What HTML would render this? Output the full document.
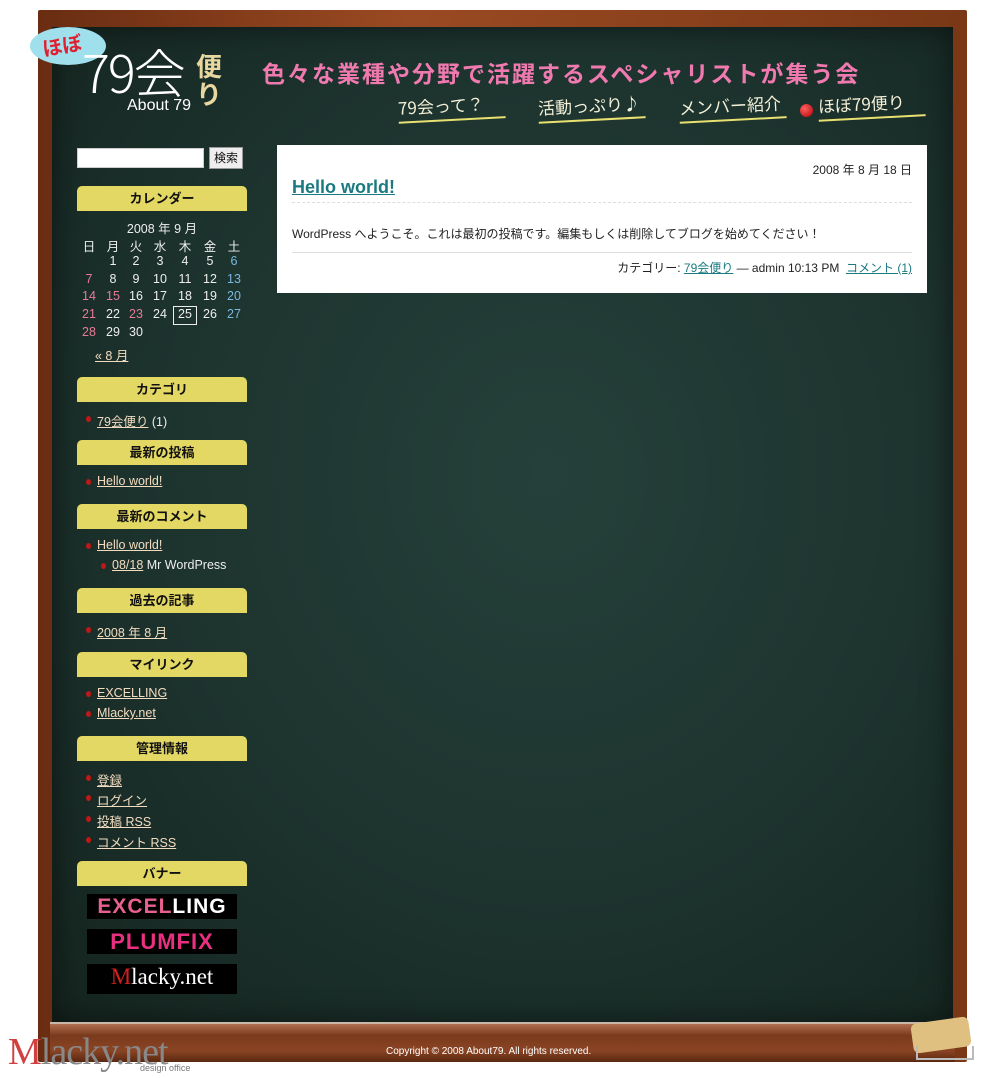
<!DOCTYPE html>
<html><head><meta charset="utf-8"><style>
*{margin:0;padding:0;box-sizing:border-box}
body{width:1000px;height:1078px;background:#fff;position:relative;overflow:hidden;font-family:"Liberation Sans","Noto Sans CJK JP",sans-serif;font-size:12px;color:#eee}
.a{position:absolute}
#frame{left:38px;top:10px;width:929px;height:1052px;background:linear-gradient(90deg,#6a2d12,#9a4a22 40%,#7a3816);border-radius:2px}
#board{left:52px;top:27px;width:901px;height:996px;background:radial-gradient(ellipse at 55% 45%,#25403a 0%,#1d332e 55%,#15241f 100%);box-shadow:inset 0 0 30px rgba(0,0,0,.5)}
#tray{left:50px;top:1022px;width:905px;height:40px;background:linear-gradient(#b07050,#7a3a1c 30%,#8a4424 70%,#5a2810);border-top:2px solid #c9b8a8}
.h{position:absolute;left:77px;width:170px;height:25px;background:#e3d863;border-radius:5px 5px 0 0;color:#111;font-weight:bold;font-size:13px;text-align:center;line-height:25px}
.li{position:absolute;left:97px;color:#eee;font-size:12.5px}
.li a{color:#f2dcc0;text-decoration:underline}
.li:before{content:"";position:absolute;left:-11px;top:5px;width:5px;height:6px;border-radius:50%;background:#c01818}
.cal{position:absolute;font-size:12.5px;color:#eee;width:24px;text-align:center}
.r{color:#e87a98}.b{color:#7ab8e0}
#post{left:277px;top:145px;width:650px;height:148px;background:#fff;color:#222}
.nav{position:absolute;color:#f4f0d8;font-size:17px;font-family:"Noto Sans CJK JP",sans-serif;border-bottom:2px solid #e8e070;padding-bottom:2px;transform:rotate(-3deg)}
</style></head><body>
<div class="a" id="frame"></div>
<div class="a" id="board"></div>
<div class="a" id="tray"></div>
<div class="a" style="left:386px;top:1046px;font-size:10px;color:#fff">Copyright © 2008 About79. All rights reserved.</div>
<div class="a" style="left:8px;top:1030px;font-family:'Liberation Serif',serif;font-size:38px;color:#888;letter-spacing:-1px"><span style="color:#d04040">M</span>lacky.net</div>
<div class="a" style="left:140px;top:1063px;font-size:9px;color:#777">design office</div>
<div class="a" style="left:912px;top:1020px;width:58px;height:30px;background:#e0c080;border-radius:6px;transform:rotate(-8deg)"></div>
<div class="a" style="left:916px;top:1046px;width:58px;height:14px;border:2px solid #bbb;border-top:none"></div>

<!-- logo -->
<div class="a" style="left:30px;top:27px;width:76px;height:38px;background:#9fe0ec;border-radius:50%"></div>
<div class="a" style="left:42px;top:30px;color:#e02030;font-size:20px;font-weight:bold;font-family:'Noto Sans CJK JP',sans-serif;transform:rotate(-10deg)">ほぼ</div>
<div class="a" style="left:82px;top:44px;color:#fff;font-size:52px;line-height:54px;font-family:'Noto Sans CJK JP',sans-serif;letter-spacing:-2px;font-weight:300">79会</div>
<div class="a" style="left:196px;top:52px;color:#e8d8a0;font-size:26px;line-height:28px;font-family:'Noto Sans CJK JP',sans-serif;font-weight:bold">便<br>り</div>
<div class="a" style="left:127px;top:97px;color:#fff;font-size:16px">About 79</div>
<div class="a" style="left:262px;top:55px;color:#f07ab0;font-size:23px;font-family:'Noto Sans CJK JP',sans-serif;font-weight:bold;letter-spacing:2px">色々な業種や分野で活躍するスペシャリストが集う会</div>
<div class="nav" style="left:398px;top:92px;width:107px">79会って？</div>
<div class="nav" style="left:538px;top:92px;width:107px">活動っぷり♪</div>
<div class="nav" style="left:679px;top:92px;width:107px">メンバー紹介</div>
<div class="a" style="left:800px;top:104px;width:13px;height:13px;border-radius:50%;background:radial-gradient(circle at 35% 35%,#ff6060,#b00000)"></div>
<div class="nav" style="left:818px;top:90px;width:107px">ほぼ79便り</div>

<!-- search -->
<div class="a" style="left:77px;top:148px;width:127px;height:20px;background:#fff;border:1px solid #ccc"></div>
<div class="a" style="left:209px;top:147px;width:34px;height:22px;background:#eee;border:1px solid #999;color:#111;font-size:12px;text-align:center;line-height:20px">検索</div>

<div class="h" style="top:186px">カレンダー</div>
<div class="a" style="left:77px;top:218px;width:170px;text-align:center;font-size:12.5px">2008 年 9 月</div>
<div id="cal"></div>
<div class="a" style="left:95px;top:345px;color:#f2dcc0;text-decoration:underline;font-size:12.5px">« 8 月</div>
<div class="a" style="left:173px;top:306px;width:24px;height:19px;border:1px solid #eee"></div>

<div class="h" style="top:377px">カテゴリ</div>
<div class="li" style="top:411px"><a>79会便り</a> (1)</div>
<div class="h" style="top:440px">最新の投稿</div>
<div class="li" style="top:474px"><a>Hello world!</a></div>
<div class="h" style="top:504px">最新のコメント</div>
<div class="li" style="top:538px"><a>Hello world!</a></div>
<div class="li" style="top:558px;left:112px"><a>08/18</a> Mr WordPress</div>
<div class="h" style="top:588px">過去の記事</div>
<div class="li" style="top:622px"><a>2008 年 8 月</a></div>
<div class="h" style="top:652px">マイリンク</div>
<div class="li" style="top:686px"><a>EXCELLING</a></div>
<div class="li" style="top:706px"><a>Mlacky.net</a></div>
<div class="h" style="top:736px">管理情報</div>
<div class="li" style="top:770px"><a>登録</a></div>
<div class="li" style="top:790px"><a>ログイン</a></div>
<div class="li" style="top:811px"><a>投稿 RSS</a></div>
<div class="li" style="top:832px"><a>コメント RSS</a></div>
<div class="h" style="top:861px">バナー</div>
<div class="a" style="left:87px;top:894px;width:150px;height:25px;background:#000;font-size:21px;line-height:25px;text-align:center;font-weight:bold;letter-spacing:1px"><span style="color:#e86090">EXCEL</span><span style="color:#fff">LING</span></div>
<div class="a" style="left:87px;top:929px;width:150px;height:25px;background:#000;font-size:22px;line-height:25px;text-align:center;font-weight:bold;color:#e83080;letter-spacing:1px">PLUMFIX</div>
<div class="a" style="left:87px;top:964px;width:150px;height:30px;background:#000;font-family:'Liberation Serif',serif;font-size:23px;line-height:26px;text-align:center;color:#fff"><span style="color:#d02020">M</span>lacky.net</div>

<div class="a" id="post">
<div class="a" style="right:15px;top:16px;font-size:12px">2008 年 8 月 18 日</div>
<div class="a" style="left:15px;top:32px;font-size:18px;font-weight:bold;color:#1a7a80;text-decoration:underline">Hello world!</div>
<div class="a" style="left:15px;top:57px;width:620px;border-top:1px dashed #ddd"></div>
<div class="a" style="left:15px;top:80px;font-size:12px">WordPress へようこそ。これは最初の投稿です。編集もしくは削除してブログを始めてください！</div>
<div class="a" style="left:15px;top:107px;width:620px;border-top:1px solid #ddd"></div>
<div class="a" style="right:15px;top:114px;font-size:12px">カテゴリー: <u style="color:#1a7a80">79会便り</u> — admin 10:13 PM &nbsp;<u style="color:#1a7a80">コメント (1)</u></div>
</div>
<script>
var c=[89,113,136,160,185,210,234],rows=[["日","月","火","水","木","金","土"],["","1","2","3","4","5","6"],["7","8","9","10","11","12","13"],["14","15","16","17","18","19","20"],["21","22","23","24","25","26","27"],["28","29","30","","","",""]],ys=[236,254,272,289,307,325],h="";
var red={"7":1,"14":1,"15":1,"21":1,"23":1,"28":1},blue={"6":1,"13":1,"20":1,"27":1};
rows.forEach(function(r,i){r.forEach(function(t,j){var cl=red[t]?"r":blue[t]?"b":"";h+='<div class="cal '+cl+'" style="left:'+(c[j]-12)+'px;top:'+ys[i]+'px">'+t+'</div>';});});
document.getElementById("cal").innerHTML=h;
</script>
</body></html>
